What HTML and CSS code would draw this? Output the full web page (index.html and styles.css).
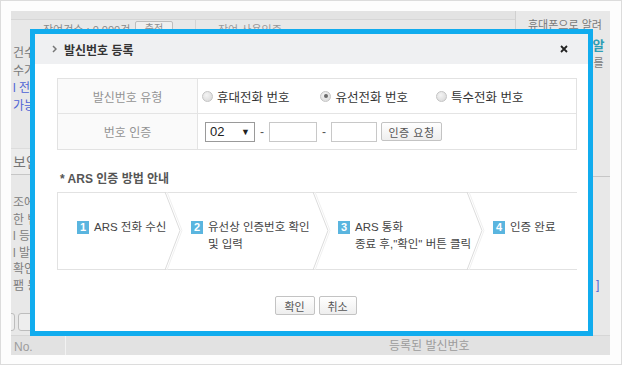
FILE: index.html
```html
<!DOCTYPE html>
<html lang="ko">
<head>
<meta charset="utf-8">
<title>발신번호 등록</title>
<link rel="stylesheet" href="styles.css">
</head>
<body>
<div class="frame">
  <div class="page">
    <div class="upper">
      <div class="upper-left">
        <div class="band"></div>
        <div class="tbar">
          <span class="cnt">잔여건수 : 0,000건</span>
          <span class="tbtn">충전</span>
          <span class="tsep"></span>
          <span class="tmid">잔여 사용인증</span>
        </div>
        <div class="notes">
          <p>건수</p>
          <p>수가</p>
          <p class="blue">l 전</p>
          <p class="blue">가능</p>
        </div>
        <div class="sec">보안</div>
      </div>
      <div class="upper-right">
        <p>휴대폰으로 알려</p>
        <p class="teal">으로 알</p>
        <p class="last">발신번호를</p>
      </div>
    </div>
    <div class="middle">
      <div class="mid-left">
        <p>조에</p>
        <p>한 번</p>
        <p>l 등</p>
        <p>l 발</p>
        <p>확인</p>
        <p>팸 등</p>
        <div class="fields"><span class="fld a"></span><span class="fld b"></span></div>
      </div>
      <div class="mid-right"><span class="brk">]</span></div>
    </div>
    <div class="thead">
      <span class="th-no">No.</span>
      <span class="th-num">등록된 발신번호</span>
    </div>
  </div>

  <div class="dialog">
    <div class="dlg-head">
      <svg class="chev" width="5" height="8" viewBox="0 0 5 8"><path d="M1 1 L4 4 L1 7" fill="none" stroke="#777" stroke-width="1.5"/></svg>
      <span class="dlg-title">발신번호 등록</span>
      <svg class="close" width="8" height="8" viewBox="0 0 8 8"><path d="M1 1 L7 7 M7 1 L1 7" stroke="#222" stroke-width="1.8"/></svg>
    </div>
    <div class="dlg-body">
      <div class="form">
        <div class="lbl">발신번호 유형</div>
        <div class="val radios">
          <label class="radio"><span class="dot"></span>휴대전화 번호</label>
          <label class="radio on"><span class="dot"></span>유선전화 번호</label>
          <label class="radio"><span class="dot"></span>특수전화 번호</label>
        </div>
        <div class="lbl">번호 인증</div>
        <div class="val auth">
          <span class="select">02<span class="arr">▼</span></span>
          <span class="dash">-</span>
          <span class="inp w48"></span>
          <span class="dash">-</span>
          <span class="inp w46"></span>
          <span class="btn req">인증 요청</span>
        </div>
      </div>

      <div class="ars-title">* ARS 인증 방법 안내</div>
      <div class="steps">
        <svg class="chevrons" width="519" height="78" viewBox="0 0 519 78">
          <g fill="none" stroke-width="1">
            <path d="M110 0 L125 38.5 L110 78" stroke="#f0f0f0"/>
            <path d="M108 0 L123 38.5 L108 78" stroke="#dcdcdc"/>
            <path d="M258 0 L273 38.5 L258 78" stroke="#f0f0f0"/>
            <path d="M256 0 L271 38.5 L256 78" stroke="#dcdcdc"/>
            <path d="M412 0 L427 38.5 L412 78" stroke="#f0f0f0"/>
            <path d="M410 0 L425 38.5 L410 78" stroke="#dcdcdc"/>
          </g>
        </svg>
        <div class="step s1"><span class="num">1</span><span class="txt">ARS 전화 수신</span></div>
        <div class="step s2"><span class="num">2</span><span class="txt">유선상 인증번호 확인<br>및 입력</span></div>
        <div class="step s3"><span class="num">3</span><span class="txt">ARS 통화<br>종료 후,"확인" 버튼 클릭</span></div>
        <div class="step s4"><span class="num">4</span><span class="txt">인증 완료</span></div>
      </div>

      <div class="actions">
        <span class="btn ok">확인</span>
        <span class="btn cancel">취소</span>
      </div>
    </div>
  </div>
</div>
</body>
</html>
```

FILE: styles.css
```css
* { box-sizing: border-box; }
html, body { margin: 0; padding: 0; background: #fdfdfd; }
body { font-family: "Liberation Sans", "Noto Sans CJK KR", sans-serif; font-size: 12px; }
p { margin: 0; }

.frame {
  position: relative;
  width: 622px;
  height: 365px;
  border: 1px solid #dcdcdc;
  padding: 10px 11px 9px 10px;
  background: #fdfdfd;
}

/* dimmed background page */
.page {
  width: 599px;
  height: 344px;
  background: #e8e8e8;
  overflow: hidden;
  display: flex;
  flex-direction: column;
  color: #8e8e8e;
}
.upper { display: grid; grid-template-columns: 504px 95px; height: 166px; flex: none; }
.upper-left { display: flex; flex-direction: column; }
.band { height: 9px; flex: none; background: #e3e3e3; border-bottom: 1px solid #d6d6d6; }
.tbar { height: 18px; flex: none; display: flex; align-items: center; padding-left: 32px; white-space: nowrap; }
.cnt { width: 92px; color: #8a8a8a; font-size: 11px; }
.tbtn { width: 38px; height: 16px; border: 1px solid #bdbdbd; background: #efefef; border-radius: 2px; font-size: 10px; text-align: center; line-height: 14px; }
.tsep { width: 1px; height: 18px; background: #d4d4d4; margin: 0 22px; }
.tmid { color: #9a9a9a; font-size: 11px; }
.notes { padding: 7px 0 0 2px; line-height: 17.5px; color: #7a7a7a; flex: none; }
.notes .blue { color: #4d63d6; }
.sec { margin-top: 33px; height: 27px; flex: none; background: #ececec; border-top: 1px solid #dcdcdc; border-bottom: 1px solid #c6c6c6; font-size: 14px; line-height: 26px; padding-left: 2px; color: #777; }
.upper-right { border-left: 1px solid #d0d0d0; padding: 6px 0 0 12px; color: #7a7a7a; border-bottom: 1px solid #c6c6c6; font-size: 11px; }
.upper-right p { line-height: 16px; white-space: nowrap; }
.upper-right .teal { color: #2f9db4; font-weight: bold; font-size: 13px; margin-top: 4px; line-height: 18px; padding-left: 37px; }
.upper-right .last { padding-left: 25px; }

.middle { display: grid; grid-template-columns: 582px 17px; height: 158px; flex: none; }
.mid-left { padding: 18px 0 0 2px; line-height: 16.5px; color: #808080; }
.fields { display: flex; gap: 3px; margin: 19px 0 0 -6px; }
.fld { height: 18px; border: 1px solid #bdbdbd; border-radius: 3px; background: #eeeeee; }
.fld.a { width: 8px; }
.fld.b { width: 40px; }
.mid-right { padding-top: 101px; }
.brk { color: #4d63d6; font-size: 12px; padding-left: 3px; }

.thead { height: 20px; flex: none; background: #e2e2e2; border-top: 1px solid #d6d6d6; display: flex; align-items: center; color: #9c9c9c; }
.th-no { width: 55px; height: 100%; border-right: 1px solid #f2f2f2; padding-left: 3px; line-height: 22px; }
.th-num { flex: 1; padding-left: 323px; line-height: 22px; }

/* dialog */
.dialog {
  position: absolute;
  left: 29px;
  top: 28px;
  width: 563px;
  height: 307px;
  border: 5px solid #11acee;
  background: #fff;
  display: flex;
  flex-direction: column;
  color: #333;
}
.dlg-head {
  height: 30px;
  flex: none;
  background: #eff0f2;
  display: flex;
  align-items: center;
  padding: 0 17px 0 17px;
}
.chev { margin-right: 7px; }
.dlg-title { font-weight: bold; font-size: 12px; color: #333; flex: 1; }
.close { margin-right: 3px; }

.dlg-body { padding: 14px 11px 0 22px; display: flex; flex-direction: column; }

.form {
  display: grid;
  grid-template-columns: 140px 1fr;
  grid-template-rows: 35px 35px;
  border: 1px solid #e2e2e2;
}
.lbl {
  background: #fafafa;
  color: #939393;
  display: flex;
  align-items: center;
  justify-content: center;
  border-right: 1px solid #e4e4e4;
}
.lbl:first-child, .radios { border-bottom: 1px solid #e4e4e4; }
.val { display: flex; align-items: center; }
.radios { padding-left: 4px; }
.radio { display: flex; align-items: center; gap: 4px; color: #333; margin-right: 31px; font-size: 12.5px; }
.radio:nth-child(2) { margin-right: 28px; }
.dot {
  width: 11px; height: 11px; border-radius: 50%;
  border: 1px solid #c4c4c4;
  background: radial-gradient(circle at 40% 35%, #f4f4f4, #d6d6d6);
  position: relative;
}
.radio.on .dot::after {
  content: "";
  position: absolute;
  left: 2.5px; top: 2.5px;
  width: 4px; height: 4px; border-radius: 50%;
  background: #6a6a6a;
}
.auth { padding-left: 7px; }
.select {
  width: 50px; height: 20px;
  border: 1px solid #9a9a9a;
  display: flex; align-items: center; justify-content: space-between;
  padding: 0 4px 0 4px;
  font-size: 13px; color: #222;
}
.arr { font-size: 9px; color: #222; }
.dash { color: #555; width: 14px; text-align: center; }
.inp { height: 20px; border: 1px solid #c8c8c8; background: #fff; }
.w48 { width: 48px; }
.w46 { width: 46px; margin-right: 4px; }
.btn {
  height: 19px;
  border: 1px solid #c3c3c3;
  border-radius: 2px;
  background: linear-gradient(#ffffff, #eeeeee);
  color: #555;
  font-size: 11px;
  display: flex; align-items: center; justify-content: center;
}
.req { width: 61px; letter-spacing: 0.5px; }

.ars-title { margin-top: 22px; margin-left: 3px; font-weight: bold; color: #555; font-size: 12px; line-height: 14px; }
.steps {
  position: relative;
  margin-top: 6px;
  height: 78px;
  border-top: 1px solid #e2e2e2;
  border-bottom: 1px solid #e2e2e2;
  border-left: 1px solid #e2e2e2;
  display: flex;
}
.chevrons { position: absolute; left: -1px; top: -1px; }
.step { display: flex; align-items: flex-start; gap: 5px; padding: 26px 0 0 19px; color: #444; font-size: 11.5px; line-height: 17px; }
.s1 { width: 112px; }
.s2 { width: 148px; padding-left: 21px; }
.s3 { width: 155px; padding-left: 20px; }
.s4 { flex: 1; padding-left: 20px; }
.num {
  width: 12px; height: 13px; margin-top: 2px;
  background: #5ab5df;
  color: #fff; font-weight: bold; font-size: 11px;
  display: flex; align-items: center; justify-content: center;
  flex: none;
}
.txt { white-space: nowrap; }

.actions { display: flex; justify-content: center; gap: 4px; margin-top: 26px; padding-right: 3px; }
.ok { width: 40px; }
.cancel { width: 38px; }
```
